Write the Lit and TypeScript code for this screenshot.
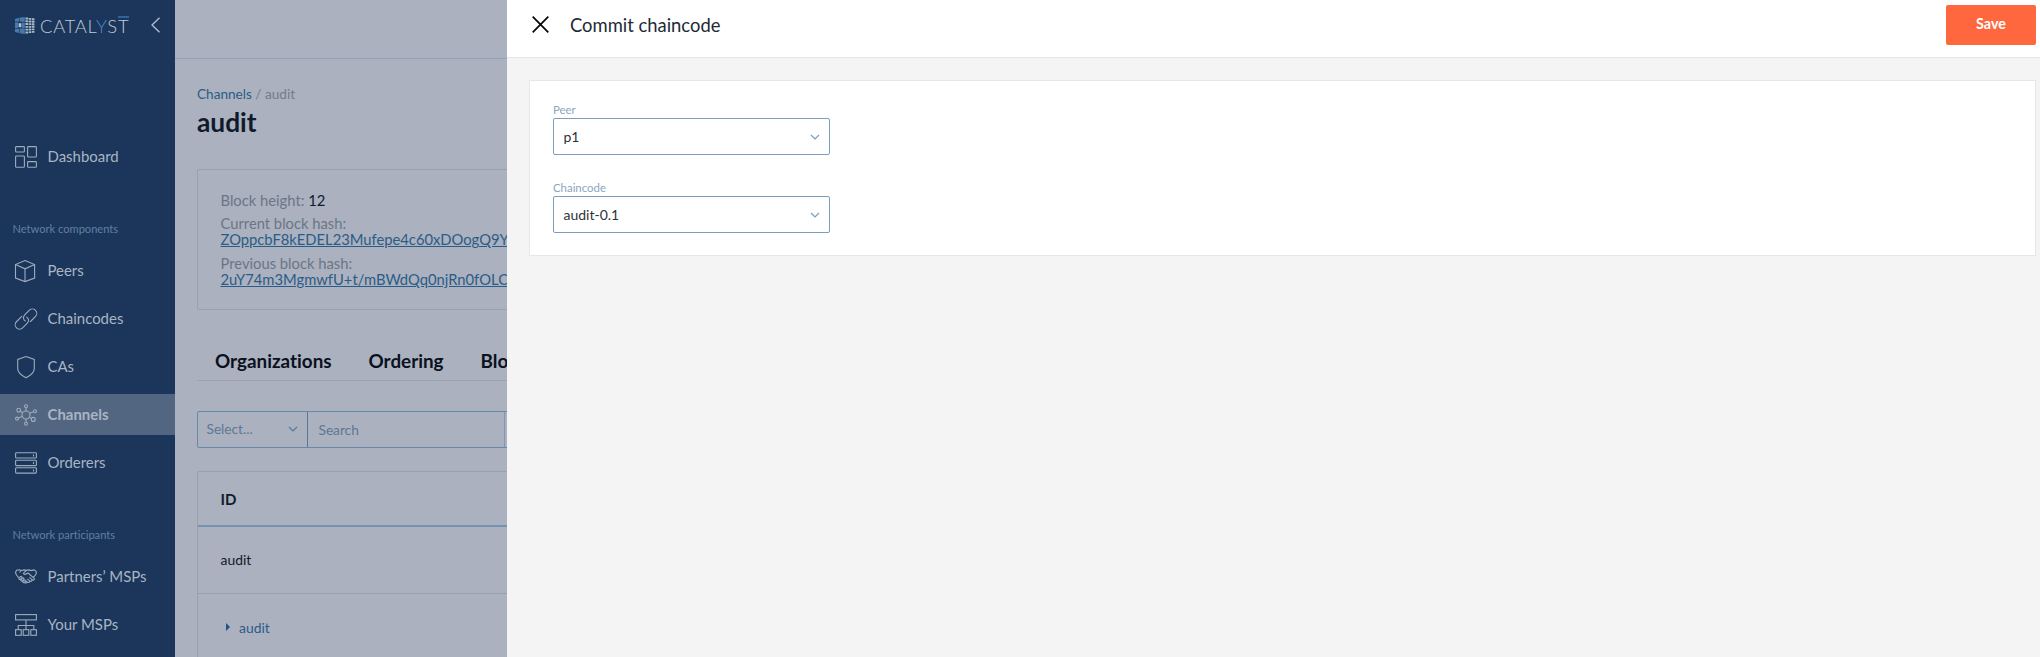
import { LitElement, html, css, svg } from "lit";
import { customElement, property } from "lit/decorators.js";
import { classMap } from "lit/directives/class-map.js";

const icons: Record<string, unknown> = {
  dashboard: svg`<rect x=".6" y=".6" width="8.8" height="5.4" rx=".8"/><rect x="12.6" y=".6" width="8.8" height="10.4" rx=".8"/><rect x=".6" y="10" width="8.8" height="11.2" rx=".8"/><rect x="12.6" y="15.6" width="8.8" height="5.6" rx=".8"/>`,
  peers: svg`<path d="M10 .6 19.6 4.6V18L10 21.6.5 18V4.6ZM.5 4.6 10 8.8l9.6-4.2M10 8.8v12.8"/>`,
  chain: svg`<path d="M10.6 13.2C8 11.9 7.8 8.8 9.9 6.7L14.4 2.2a4.35 4.35 0 0 1 6.15 6.15L16 13c-.5.4-.9.7-1.3.8"/><path d="M11.4 8.9c2.6 1.3 2.8 4.4.7 6.5l-4.5 4.5a4.35 4.35 0 0 1-6.15-6.15L6 9.1c.5-.4.9-.7 1.3-.8"/>`,
  shield: svg`<path d="M11 .5 19.3 3.4V12.5C19.3 16.5 15.5 19.5 11 21.8 6.5 19.5 2.7 16.5 2.7 12.5V3.4Z"/>`,
  channels: svg`<circle cx="11" cy="11" r="4"/><circle cx="11" cy="2.2" r="1.5"/><circle cx="11" cy="19.8" r="1.5"/><circle cx="3.7" cy="6.2" r="1.9"/><circle cx="20" cy="7.2" r="1.5"/><circle cx="2" cy="14.6" r="1.5"/><circle cx="18.3" cy="15.4" r="2"/><path d="M11 3.7V7M11 15v3.3M5.3 7.2 7.6 8.8M18.6 7.8 14.6 9.3M3.4 14 7.3 12.5M16.5 14.5 14.4 13.1"/>`,
  orderers: svg`<rect x=".6" y=".8" width="20.8" height="5.2" rx=".8"/><rect x=".6" y="8.2" width="20.8" height="5.4" rx=".8"/><rect x=".6" y="15.8" width="20.8" height="5.3" rx=".8"/><path d="M18.5 2.4v2M18.5 9.9v2M18.5 17.5v2"/>`,
  partners: svg`<path d="M6.3 4.5 4.6 3.7 1.4 4.3.5 6.7 1.5 9l2.2 2.6M6.3 4.5l3-.6 2.2.4 2.5-.4 2 .7 3.2-.7 2 1.5v2.3l-1.4 2.2-1.5 1.2M6.3 4.5 4.5 6.5M11.5 4.3 8.3 7.3c.8 1.5 2.2 1.3 3.5.2L13 7l6.2 5.3c.6 1.2-.6 2.2-1.8 1.6l-3-2.6M16.8 13.6c.5 1.3-.7 2.2-1.9 1.5l-2.6-2.2M14.6 15c.2 1.3-1 1.9-2.1 1.2l-2-1.6M12 16c-.5 1.2-1.6 1.2-2.5.5"/><path d="M4.2 11.8l1.3-1.3c1-.6 1.9.4 1.3 1.4l-1.4 1.4c-1.3.5-2-.5-1.2-1.5ZM6 13.5l1.5-1.4c1-.6 1.9.4 1.3 1.4l-1.5 1.5c-1.2.4-1.9-.6-1.3-1.5ZM8 15.2l1.2-1.1c1-.5 1.7.5 1.2 1.4l-1 1c-1.1.5-1.9-.4-1.4-1.3Z"/>`,
  msps: svg`<rect x=".6" y=".6" width="20.8" height="5.3"/><path d="M11 6v9.5M3.2 15.5v-4h15.6v4"/><rect x=".6" y="15.7" width="5.6" height="5.6"/><rect x="8.2" y="15.7" width="5.6" height="5.6"/><rect x="15.8" y="15.7" width="5.6" height="5.6"/>`,
};

@customElement("nav-item")
class NavItem extends LitElement {
  @property() icon = "";
  @property() label = "";
  @property({ type: Boolean }) active = false;
  static styles = css`
    :host { display: block; margin-bottom: 7px; }
    .item { display: flex; align-items: center; height: 41px; padding-left: 15px; gap: 10.5px; color: #a9b5c4; font-size: 14.95px; line-height: 20px; }
    .active { background: #526681; font-weight: 700; }
    svg { width: 22px; height: 22px; fill: none; stroke: #9dacbd; stroke-width: 1.1; overflow: visible; flex: none; }
    .item span { white-space: nowrap; padding-bottom: 1px; }
  `;
  render() {
    return html`<div class=${classMap({ item: true, active: this.active })}>
      <svg viewBox="0 0 22 22">${icons[this.icon]}</svg><span>${this.label}</span>
    </div>`;
  }
}

@customElement("select-field")
class SelectField extends LitElement {
  @property() label = "";
  @property() value = "";
  static styles = css`
    :host { display: block; width: 277px; }
    label { display: block; padding-top: 1px; font-size: 11.4px; line-height: 16px; color: #8aa6c1; }
    .box { box-sizing: border-box; display: flex; align-items: center; justify-content: space-between; height: 37px; padding: 0 9px 0 9.5px; border: 1px solid #7d9dbd; border-radius: 2px; font-size: 14px; color: #2c3238; background: #fff; }
    svg { width: 10px; height: 6px; fill: none; stroke: #7d9dbd; stroke-width: 1.2; }
  `;
  render() {
    return html`<label>${this.label}</label>
      <div class="box"><span>${this.value}</span><svg viewBox="0 0 10 6"><path d="M1 1l4 4 4-4" /></svg></div>`;
  }
}

@customElement("brand-logo")
class BrandLogo extends LitElement {
  static styles = css`
    :host { display: flex; align-items: center; gap: 5px; }
    svg { width: 20px; height: 17px; }
    .name { position: relative; padding-top: 1px; font-size: 18.4px; line-height: 20px; font-weight: 300; color: #c0cad5; letter-spacing: 0.75px; }
    .name b { font-weight: 300; color: #4a86c6; }
    .bar { position: absolute; right: 0; top: 1px; width: 11px; height: 2px; background: #2f639c; }
  `;
  render() {
    const dots = [];
    for (let r = 0; r < 6; r++)
      for (let c = 0; c < 3; c++)
        dots.push(svg`<rect x=${10.4 + c * 3.2} y=${0.5 + c * 0.4 + r * (2.8 - c * 0.14)} width="2.7" height="1.9" rx=".5" fill="#a9b8c8"/>`);
    return html`<svg viewBox="0 0 20 17">
        <path d="M0 2 4 .7V4.5H0ZM4.6 .6 9.8 0V4.7H4.6ZM0 5.2H3V11H0ZM0 11.8H4V16L0 15ZM4.6 11.6H9.8V17L4.6 16.3ZM7 5.4H9.8V11H7Z" fill="#4779ad" />
        <path d="M3.6 6.2H6.4V10.2H3.6Z" fill="#b5c4d4" />${dots}
      </svg>
      <div class="name">CATAL<b>Y</b>ST<i class="bar"></i></div>`;
  }
}

@customElement("app-root")
class AppRoot extends LitElement {
  static styles = css`
    :host { display: flex; height: 657px; overflow: hidden; font-family: "Lato", sans-serif; font-variant-ligatures: none; background: #f4f4f4; }
    * { box-sizing: border-box; }
    aside { flex: none; width: 175px; height: 100%; background: #1b365a; overflow: hidden; }
    .brand { display: flex; align-items: center; justify-content: space-between; height: 50px; margin-bottom: 86px; padding: 0 15px; }
    .brand > svg { width: 9px; height: 16px; fill: none; stroke: #b3bfcc; stroke-width: 1.3; }
    h4 { margin: 0; padding-left: 12.5px; font-size: 11.1px; line-height: 16px; font-weight: 400; color: #60809f; white-space: nowrap; }
    .first { margin: 44px 0 13px; }
    .second { margin: 44px 0 13px; }

    main { flex: none; width: 332px; height: 100%; background: #abb1be; overflow: hidden; color: #0f1b2d; white-space: nowrap; }
    .top { height: 59px; border-bottom: 1px solid #8ba3bd; }
    .content { padding: 25px 0 0 22px; }
    .crumbs { font-size: 13.6px; line-height: 20px; color: #717d8e; }
    .crumbs a { color: #2a5c88; }
    h1 { margin: 3px 0 0; font-size: 26.3px; line-height: 30px; font-weight: 700; }
    .info { margin-top: 32px; height: 141px; width: 800px; border: 1px solid #99a1af; border-radius: 2px; padding: 22px 22.5px; font-size: 14.75px; line-height: 16px; color: #6a7687; }
    .info p { margin: 0 0 7.4px; }
    .info b { font-weight: 400; color: #0f1b2d; }
    .info a { display: block; color: #2a5c88; text-decoration: underline; }
    .tabs { display: flex; gap: 37px; width: 800px; height: 51px; margin-top: 20px; padding: 19px 0 0 18px; border-bottom: 1px solid #9aa3b1; font-size: 18.85px; line-height: 24px; font-weight: 700; color: #0a1120; }
    .filter { display: flex; width: 800px; height: 37px; margin-top: 30px; border: 1px solid #6789ab; border-radius: 2px; font-size: 13.7px; color: #5d7796; }
    .pick { display: flex; align-items: center; justify-content: space-between; width: 110px; padding: 0 9px 2px 8.5px; border-right: 1px solid #55779e; }
    .pick svg { width: 10px; height: 6px; fill: none; stroke: #55779e; stroke-width: 1.2; }
    .search { display: flex; align-items: center; width: 197px; padding: 0 0 0 10.5px; border-right: 1px solid #8197af; }
    .table { width: 800px; height: 300px; margin-top: 23px; border: 1px solid #99a1af; border-radius: 2px; font-size: 13.9px; }
    .row { display: flex; align-items: center; height: 67px; padding: 0 0 2px 22.5px; border-bottom: 1px solid #99a1af; }
    .head { height: 55px; padding-top: 1px; padding-bottom: 0; font-size: 15px; font-weight: 700; border-bottom: 2px solid #7393b2; }
    .child { color: #2a5c88; padding: 0 0 0 27.5px; gap: 9.5px; }
    .child svg { width: 4px; height: 8px; fill: #1d5583; }

    .drawer { flex: 1; min-width: 0; height: 100%; }
    header { display: flex; align-items: center; height: 58px; padding: 0 4px 9px 25px; background: #fff; border-bottom: 1px solid #e4e5e6; }
    header svg { width: 17px; height: 17px; fill: none; stroke: #050505; stroke-width: 1.7; }
    h2 { flex: 1; margin: 1px 0 0 21px; font-size: 18.4px; line-height: 24px; font-weight: 400; color: #1d2a36; }
    button { width: 90px; height: 40px; margin-top: 2px; padding: 0 0 3px; border: 0; border-radius: 2px; background: #ff673f; color: #fff; font: 700 14.3px/18px "Lato", sans-serif; }
    .panel { margin: 22px 4px 0 22px; height: 176px; padding: 20px 23px; background: #fff; border: 1px solid #e6e7e8; display: flex; flex-direction: column; gap: 24px; }
  `;
  render() {
    return html`
      <aside>
        <div class="brand"><brand-logo></brand-logo><svg viewBox="0 0 9 16"><path d="M8.5 .8 1 8l7.5 7.2" /></svg></div>
        <nav-item icon="dashboard" label="Dashboard"></nav-item>
        <h4 class="first">Network components</h4>
        <nav-item icon="peers" label="Peers"></nav-item>
        <nav-item icon="chain" label="Chaincodes"></nav-item>
        <nav-item icon="shield" label="CAs"></nav-item>
        <nav-item icon="channels" label="Channels" active></nav-item>
        <nav-item icon="orderers" label="Orderers"></nav-item>
        <h4 class="second">Network participants</h4>
        <nav-item icon="partners" label="Partners’ MSPs"></nav-item>
        <nav-item icon="msps" label="Your MSPs"></nav-item>
      </aside>
      <main>
        <div class="top"></div>
        <div class="content">
          <div class="crumbs"><a>Channels</a> / audit</div>
          <h1>audit</h1>
          <div class="info">
            <p>Block height: <b>12</b></p>
            <p>Current block hash:<a>ZOppcbF8kEDEL23Mufepe4c60xDOogQ9Y</a></p>
            <p>Previous block hash:<a>2uY74m3MgmwfU+t/mBWdQq0njRn0fOLC</a></p>
          </div>
          <div class="tabs"><span>Organizations</span><span>Ordering</span><span>Blocks</span></div>
          <div class="filter">
            <div class="pick">Select...<svg viewBox="0 0 10 6"><path d="M1 1l4 4 4-4" /></svg></div>
            <div class="search">Search</div>
          </div>
          <div class="table">
            <div class="row head">ID</div>
            <div class="row">audit</div>
            <div class="row child"><svg viewBox="0 0 4 8"><path d="M0 0l4 4-4 4z" /></svg>audit</div>
          </div>
        </div>
      </main>
      <section class="drawer">
        <header>
          <svg viewBox="0 0 17 17"><path d="M.7 .7 16.3 16.3M16.3 .7 .7 16.3" /></svg>
          <h2>Commit chaincode</h2>
          <button>Save</button>
        </header>
        <div class="panel">
          <select-field label="Peer" value="p1"></select-field>
          <select-field label="Chaincode" value="audit-0.1"></select-field>
        </div>
      </section>
    `;
  }
}
